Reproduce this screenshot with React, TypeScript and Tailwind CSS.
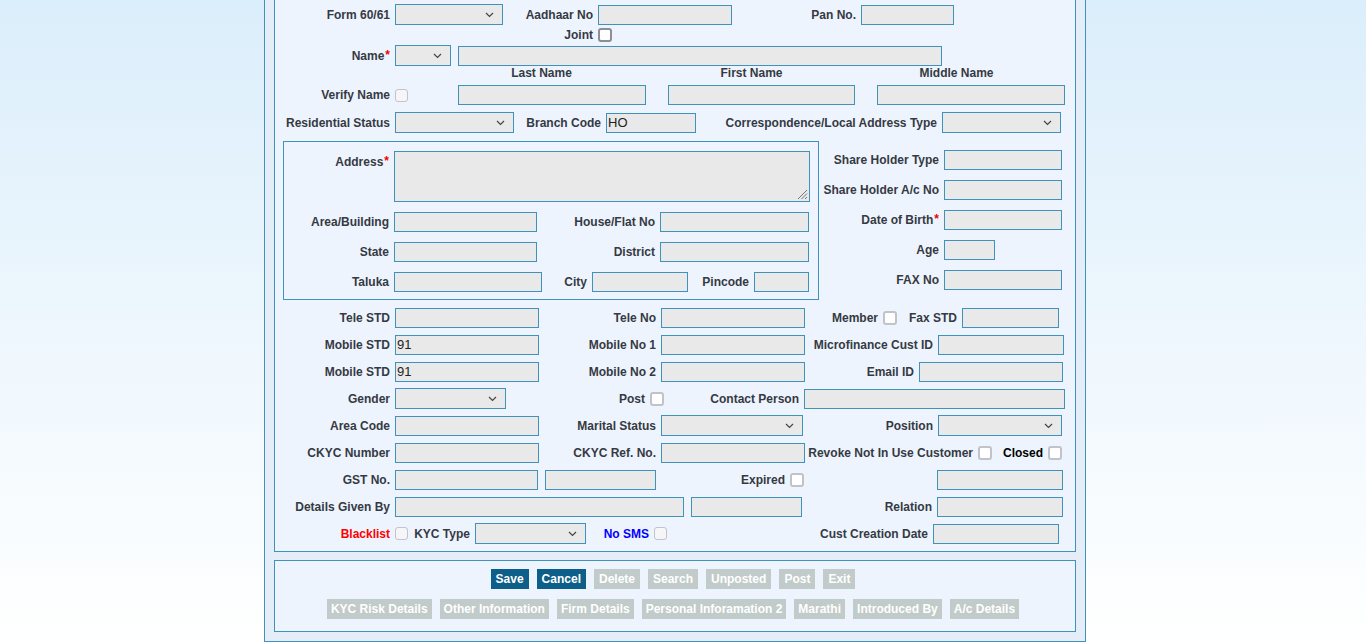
import React from 'react';

// customer master form - lower half of the page (scrolled)

const line = 'border border-[#3f93bb]';

function Label({ w, children, tone = 'text-[#353a42]' }: { w: string; children: React.ReactNode; tone?: string }) {
	return <span className={`shrink-0 whitespace-nowrap pr-[5px] text-right ${w} ${tone}`}>{children}</span>;
}

function Star() {
	return <span className="relative -top-[1px] ml-[1px] text-[#e00]">*</span>;
}

function Field({ w, value = '', className = '' }: { w: string; value?: string; className?: string }) {
	return (
		<input
			readOnly
			value={value}
			className={`h-[20px] shrink-0 ${line} bg-[#e9e9e9] px-[1px] text-[13px] font-normal text-[#222] outline-none ${w} ${className}`}
		/>
	);
}

function Drop({ w }: { w: string }) {
	return (
		<div className={`flex h-[21px] shrink-0 items-center justify-end pr-[8px] ${line} bg-[#e9e9e9] ${w}`}>
			<svg width="9" height="6" viewBox="0 0 9 6">
				<path d="M1 1l3.5 3.5L8 1" fill="none" stroke="#444" strokeWidth="1.2" />
			</svg>
		</div>
	);
}

function Check({ kind = 'light' }: { kind?: 'dark' | 'light' | 'off' }) {
	if (kind === 'off') {
		return <span className="h-[13px] w-[13px] shrink-0 rounded-[3px] border-[1.5px] border-[#c3c3cb] bg-[#f6f6f8]" />;
	}
	if (kind === 'dark') {
		return <span className="h-[14px] w-[14px] shrink-0 rounded-[3px] border-2 border-[#8d8d96] bg-white" />;
	}
	return <span className="h-[14px] w-[14px] shrink-0 rounded-[3px] border-2 border-[#c2c2c9] bg-white" />;
}

function Btn({ children, on = false, pad = 'px-[5px]' }: { children: React.ReactNode; on?: boolean; pad?: string }) {
	return (
		<span
			className={`flex h-[20px] items-center ${pad} text-[12px] font-bold text-white ${on ? 'bg-[#0d5f89]' : 'bg-[#c1cbc9]'}`}
		>
			{children}
		</span>
	);
}

export default function App() {
	const p2 = 'px-[4px]';
	return (
		<div className="flex min-h-screen flex-col bg-linear-to-b from-[#dbeefb] to-white font-['Liberation_Sans',Arial,sans-serif] text-[12px] font-bold leading-[14px]">
			<div className={`-mt-[11px] ml-[264px] w-[822px] self-start ${line} bg-[#e5edf9] px-[9px] pt-[9px] pb-[9px]`}>
				{/* main form */}
				<div className={`${line} flex flex-col bg-[#eef4fe] pb-[4px]`}>
					<div className="mt-[4px] flex h-[21px] items-center">
						<Label w="w-[120px]">Form 60/61</Label>
						<Drop w="w-[108px]" />
						<Label w="w-[95px]">Aadhaar No</Label>
						<Field w="w-[134px]" />
						<Label w="w-[129px]">Pan No.</Label>
						<Field w="w-[93px]" />
					</div>
					<div className="mt-[3px] flex h-[14px] items-center">
						<Label w="w-[323px]">Joint</Label>
						<Check kind="dark" />
					</div>
					<div className="mt-[3px] flex h-[21px] items-center">
						<Label w="w-[120px]">
							Name
							<Star />
						</Label>
						<Drop w="w-[56px]" />
						<Field w="w-[484px]" className="ml-[7px]" />
					</div>
					<div className="flex h-[14px] items-center text-[#353a42]">
						<span className="ml-[173px] w-[187px] text-center">Last Name</span>
						<span className="ml-[23px] w-[187px] text-center">First Name</span>
						<span className="ml-[18px] w-[187px] text-center">Middle Name</span>
					</div>
					<div className="mt-[5px] flex h-[20px] items-center">
						<Label w="w-[120px]">Verify Name</Label>
						<Check kind="off" />
						<Field w="w-[188px]" className="ml-[50px]" />
						<Field w="w-[187px]" className="ml-[22px]" />
						<Field w="w-[188px]" className="ml-[22px]" />
					</div>
					<div className="mt-[7px] flex h-[21px] items-center">
						<Label w="w-[120px]">Residential Status</Label>
						<Drop w="w-[119px]" />
						<Label w="w-[92px]">Branch Code</Label>
						<Field w="w-[90px]" value="HO" />
						<Label w="w-[246px]">Correspondence/Local Address Type</Label>
						<Drop w="w-[119px]" />
					</div>

					<div className="mt-[8px] flex">
						<div className={`ml-[8px] flex h-[159px] w-[536px] flex-col ${line}`}>
							<div className="mt-[9px] flex items-start">
								<Label w="w-[110px] pt-[4px]">
									Address
									<Star />
								</Label>
								<div className={`relative h-[51px] w-[416px] ${line} bg-[#e9e9e9]`}>
									<svg className="absolute right-[1px] bottom-[1px]" width="12" height="12" viewBox="0 0 12 12">
										<path d="M11 2L2 11M11 5.5L5.5 11M11 9L9 11" stroke="#777" strokeWidth="1" />
									</svg>
								</div>
							</div>
							<div className="mt-[10px] flex h-[20px] items-center">
								<Label w="w-[110px]">Area/Building</Label>
								<Field w="w-[143px]" />
								<Label w="w-[123px]">House/Flat No</Label>
								<Field w="w-[149px]" />
							</div>
							<div className="mt-[10px] flex h-[20px] items-center">
								<Label w="w-[110px]">State</Label>
								<Field w="w-[143px]" />
								<Label w="w-[123px]">District</Label>
								<Field w="w-[149px]" />
							</div>
							<div className="mt-[10px] flex h-[20px] items-center">
								<Label w="w-[110px]">Taluka</Label>
								<Field w="w-[148px]" />
								<Label w="w-[50px]">City</Label>
								<Field w="w-[96px]" />
								<Label w="w-[66px]">Pincode</Label>
								<Field w="w-[55px]" />
							</div>
						</div>
						<div className="mt-[9px] flex flex-col gap-[10px]">
							<div className="flex h-[20px] items-center">
								<Label w="w-[125px]">Share Holder Type</Label>
								<Field w="w-[118px]" />
							</div>
							<div className="flex h-[20px] items-center">
								<Label w="w-[125px]">Share Holder A/c No</Label>
								<Field w="w-[118px]" />
							</div>
							<div className="flex h-[20px] items-center">
								<Label w="w-[125px]">
									Date of Birth
									<Star />
								</Label>
								<Field w="w-[118px]" />
							</div>
							<div className="flex h-[20px] items-center">
								<Label w="w-[125px]">Age</Label>
								<Field w="w-[51px]" />
							</div>
							<div className="flex h-[20px] items-center">
								<Label w="w-[125px]">FAX No</Label>
								<Field w="w-[118px]" />
							</div>
						</div>
					</div>

					<div className="mt-[4px] flex flex-col">
						<div className="flex h-[27px] items-center">
							<Label w="w-[120px]">Tele STD</Label>
							<Field w="w-[144px]" />
							<Label w="w-[122px]">Tele No</Label>
							<Field w="w-[144px]" />
							<Label w="w-[78px]">Member</Label>
							<Check />
							<Label w="w-[65px]">Fax STD</Label>
							<Field w="w-[97px]" />
						</div>
						<div className="flex h-[27px] items-center">
							<Label w="w-[120px]">Mobile STD</Label>
							<Field w="w-[144px]" value="91" />
							<Label w="w-[122px]">Mobile No 1</Label>
							<Field w="w-[144px]" />
							<Label w="w-[133px]">Microfinance Cust ID</Label>
							<Field w="w-[126px]" />
						</div>
						<div className="flex h-[27px] items-center">
							<Label w="w-[120px]">Mobile STD</Label>
							<Field w="w-[144px]" value="91" />
							<Label w="w-[122px]">Mobile No 2</Label>
							<Field w="w-[144px]" />
							<Label w="w-[114px]">Email ID</Label>
							<Field w="w-[144px]" />
						</div>
						<div className="flex h-[27px] items-center">
							<Label w="w-[120px]">Gender</Label>
							<Drop w="w-[111px]" />
							<Label w="w-[144px]">Post</Label>
							<Check />
							<Label w="w-[140px]">Contact Person</Label>
							<Field w="w-[261px]" />
						</div>
						<div className="flex h-[27px] items-center">
							<Label w="w-[120px]">Area Code</Label>
							<Field w="w-[144px]" />
							<Label w="w-[122px]">Marital Status</Label>
							<Drop w="w-[142px]" />
							<Label w="w-[135px]">Position</Label>
							<Drop w="w-[124px]" />
						</div>
						<div className="flex h-[27px] items-center">
							<Label w="w-[120px]">CKYC Number</Label>
							<Field w="w-[144px]" />
							<Label w="w-[122px]">CKYC Ref. No.</Label>
							<Field w="w-[144px]" />
							<Label w="w-[173px]">Revoke Not In Use Customer</Label>
							<Check />
							<Label w="w-[56px]" tone="text-black">
								Closed
							</Label>
							<Check />
						</div>
						<div className="flex h-[27px] items-center">
							<Label w="w-[120px]">GST No.</Label>
							<Field w="w-[143px]" />
							<Field w="w-[111px]" className="ml-[7px]" />
							<Label w="w-[134px]">Expired</Label>
							<Check />
							<Field w="w-[126px]" className="ml-[133px]" />
						</div>
						<div className="flex h-[27px] items-center">
							<Label w="w-[120px]">Details Given By</Label>
							<Field w="w-[289px]" />
							<Field w="w-[111px]" className="ml-[7px]" />
							<Label w="w-[135px]">Relation</Label>
							<Field w="w-[126px]" />
						</div>
						<div className="flex h-[27px] items-center">
							<Label w="w-[120px]" tone="text-[#f00]">
								Blacklist
							</Label>
							<Check kind="off" />
							<Label w="w-[67px]">KYC Type</Label>
							<Drop w="w-[111px]" />
							<Label w="w-[68px]" tone="text-[#00f]">
								No SMS
							</Label>
							<Check kind="off" />
							<Label w="w-[266px]">Cust Creation Date</Label>
							<Field w="w-[126px]" />
						</div>
					</div>
				</div>

				{/* action buttons */}
				<div className={`mt-[8px] ${line} flex flex-col gap-[10px] bg-[#eef4fe] pt-[8px] pb-[12px]`}>
					<div className="flex justify-center gap-[8px] pr-[4px]">
						<Btn on>Save</Btn>
						<Btn on>Cancel</Btn>
						<Btn>Delete</Btn>
						<Btn>Search</Btn>
						<Btn>Unposted</Btn>
						<Btn>Post</Btn>
						<Btn>Exit</Btn>
					</div>
					<div className="flex justify-center gap-[8px] pr-[4px]">
						<Btn pad={p2}>KYC Risk Details</Btn>
						<Btn pad={p2}>Other Information</Btn>
						<Btn pad={p2}>Firm Details</Btn>
						<Btn pad={p2}>Personal Inforamation 2</Btn>
						<Btn pad={p2}>Marathi</Btn>
						<Btn pad={p2}>Introduced By</Btn>
						<Btn pad={p2}>A/c Details</Btn>
					</div>
				</div>
			</div>
		</div>
	);
}
